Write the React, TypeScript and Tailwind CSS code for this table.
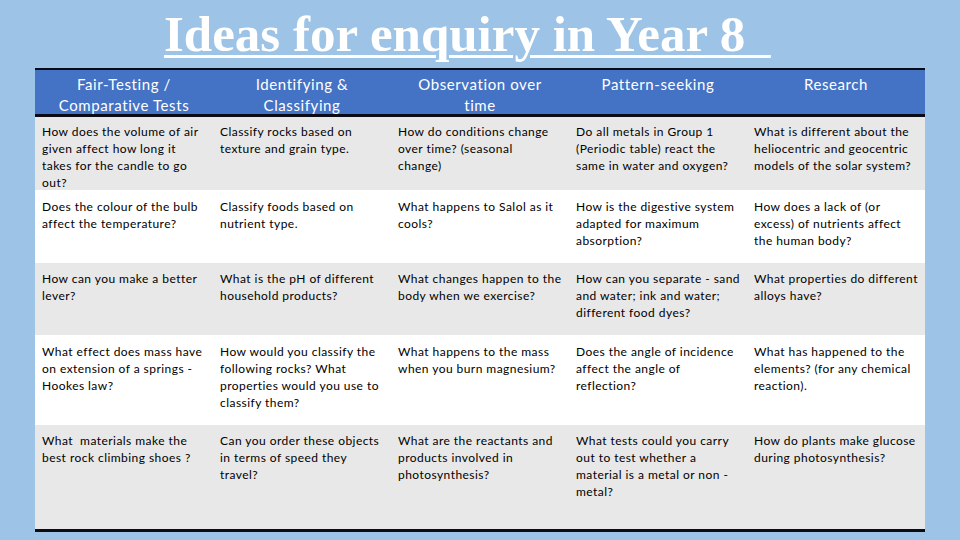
import React from "react"

const headers = [
  "Fair-Testing / Comparative Tests",
  "Identifying & Classifying",
  "Observation over time",
  "Pattern-seeking",
  "Research",
]

// lines are kept as they break in the slide
const rows: { h: string; pt: string; bg: string; cells: string[][] }[] = [
  {
    h: "h-[73px]",
    pt: "pt-[6px]",
    bg: "bg-[#e8e8e8]",
    cells: [
      ["How does the volume of air", "given affect how long it", "takes for the candle to go", "out?"],
      ["Classify rocks based on", "texture and grain type."],
      ["How do conditions change", "over time? (seasonal", "change)"],
      ["Do all metals in Group 1", "(Periodic table) react the", "same in water and oxygen?"],
      ["What is different about the", "heliocentric and geocentric", "models of the solar system?"],
    ],
  },
  {
    h: "h-[73px]",
    pt: "pt-[8px]",
    bg: "bg-white",
    cells: [
      ["Does the colour of the bulb", "affect the temperature?"],
      ["Classify foods based on", "nutrient type."],
      ["What happens to Salol as it", "cools?"],
      ["How is the digestive system", "adapted for maximum", "absorption?"],
      ["How does a lack of (or", "excess) of nutrients affect", "the human body?"],
    ],
  },
  {
    h: "h-[72px]",
    pt: "pt-[7px]",
    bg: "bg-[#e8e8e8]",
    cells: [
      ["How can you make a better", "lever?"],
      ["What is the pH of different", "household products?"],
      ["What changes happen to the", "body when we exercise?"],
      ["How can you separate - sand", "and water; ink and water;", "different food dyes?"],
      ["What properties do different", "alloys have?"],
    ],
  },
  {
    h: "h-[90px]",
    pt: "pt-[8px]",
    bg: "bg-white",
    cells: [
      ["What effect does mass have", "on extension of a springs -", "Hookes law?"],
      ["How would you classify the", "following rocks? What", "properties would you use to", "classify them?"],
      ["What happens to the mass", "when you burn magnesium?"],
      ["Does the angle of incidence", "affect the angle of", "reflection?"],
      ["What has happened to the", "elements? (for any chemical", "reaction)."],
    ],
  },
  {
    h: "h-[104px]",
    pt: "pt-[7px]",
    bg: "bg-[#e8e8e8]",
    cells: [
      ["What  materials make the", "best rock climbing shoes ?"],
      ["Can you order these objects", "in terms of speed they", "travel?"],
      ["What are the reactants and", "products involved in", "photosynthesis?"],
      ["What tests could you carry", "out to test whether a", "material is a metal or non -", "metal?"],
      ["How do plants make glucose", "during photosynthesis?"],
    ],
  },
]

export default function App() {
  return (
    <div className="w-[960px] h-[540px] overflow-hidden bg-[#9dc3e6]">
      {/* title */}
      <div className="h-[68px] pl-[164px] pt-[9px]">
        <span
          className="text-[51px] leading-[50px] font-bold text-white underline decoration-[3px] underline-offset-[4px] whitespace-pre"
          style={{ fontFamily: '"Liberation Serif", "Times New Roman", serif' }}
        >
          {"Ideas for enquiry in Year 8\u00a0\u00a0"}
        </span>
      </div>

      {/* table */}
      <div
        className="ml-[35px] w-[890px] border-t-2 border-b-[3px] border-[#0b0b16]"
        style={{ fontFamily: 'Lato, "Open Sans", sans-serif' }}
      >
        <div className="grid grid-cols-5 h-[47px] bg-[#4472c4] border-b-[3px] border-[#0b0b16]">
          {headers.map((t) => (
            <div
              key={t}
              className="px-[12px] pt-[4px] text-center text-white text-[15px] leading-[21px] tracking-[0.6px]"
            >
              {t}
            </div>
          ))}
        </div>
        {rows.map((r, i) => (
          <div key={i} className={`grid grid-cols-5 ${r.h} ${r.bg}`}>
            {r.cells.map((lines, j) => (
              <div
                key={j}
                className={`pl-[7px] ${r.pt} text-[12px] leading-[17px] tracking-[0.45px] text-black whitespace-pre overflow-hidden`}
              >
                {lines.map((l, k) => (
                  <div key={k}>{l}</div>
                ))}
              </div>
            ))}
          </div>
        ))}
      </div>
    </div>
  )
}
